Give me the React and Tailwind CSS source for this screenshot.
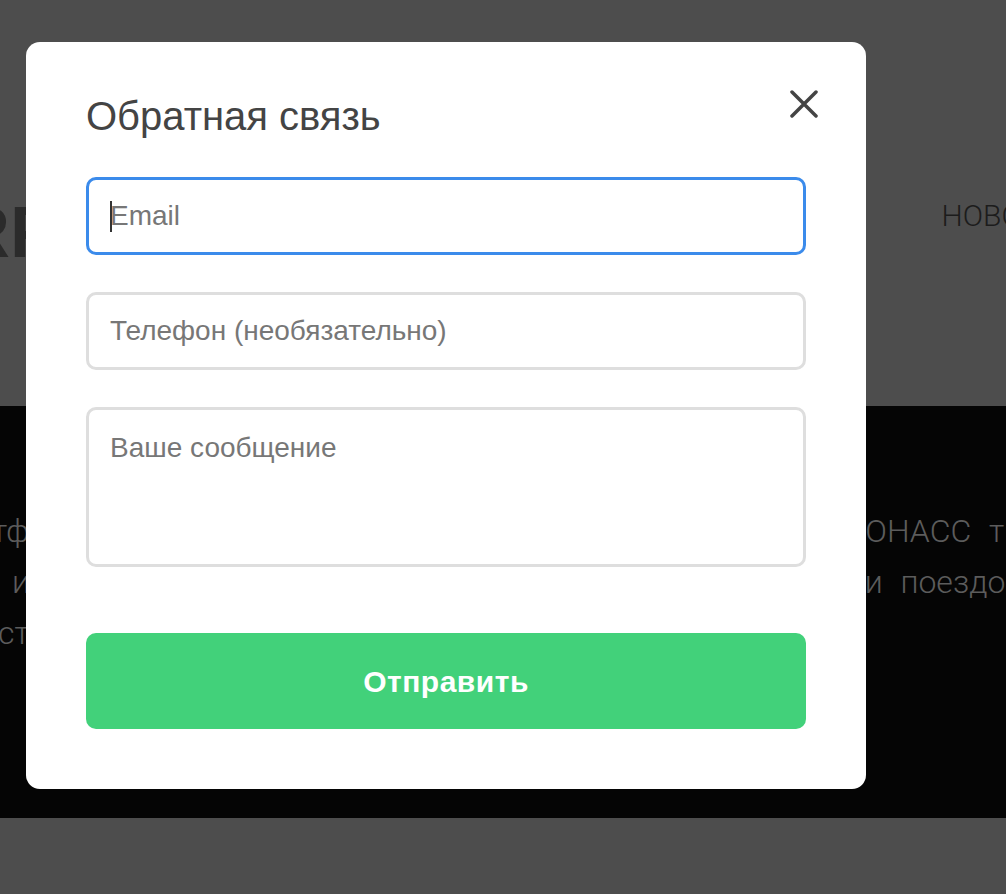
import React from 'react';

const CloseIcon = () => (
  <svg width="28" height="28" viewBox="0 0 28 28" fill="none">
    <path d="M2 2 L26 26 M26 2 L2 26" stroke="#444444" strokeWidth="3.5" strokeLinecap="round" />
  </svg>
);

const App = () => {
  return (
    <div className="relative w-full overflow-hidden font-['Liberation_Sans',Arial,sans-serif]">
      {/* page under the overlay */}
      <div className="h-[406px] bg-[#4d4d4d] font-['Roboto',sans-serif]">
        <div className="flex items-start justify-between whitespace-nowrap pt-[196px]">
          <span className="-ml-[42px] font-['Liberation_Sans',sans-serif] text-[72px] font-bold leading-none text-[#2b2b2b]">RP</span>
          <span className="-mr-[74px] mt-[5px] text-[30px] font-light leading-none text-[#1c1c1c]">НОВОСТИ</span>
        </div>
      </div>

      <div className="h-[412px] bg-[#050505] pt-[100px] font-['Roboto',sans-serif] text-[32px] font-light leading-[51px] text-[#5c5c5c]">
        <div className="flex justify-between whitespace-nowrap">
          <span className="-ml-[8px]">тф</span>
          <span className="-mr-[16px] [word-spacing:10px]">ОНАСС тр</span>
        </div>
        <div className="flex justify-between whitespace-nowrap">
          <span className="ml-[12px]">и</span>
          <span className="-mr-[16px] [word-spacing:10px]">и поездок</span>
        </div>
        <div className="flex justify-between whitespace-nowrap">
          <span className="-ml-[2px]">ст</span>
          <span></span>
        </div>
      </div>

      <div className="h-[76px] bg-[#4d4d4d]" />

      {/* feedback modal */}
      <div className="fixed inset-0 pl-[26px] pt-[42px]">
        <div className="relative w-[840px] rounded-[14px] bg-white px-[60px] pt-[54px] pb-[60px]">
          <h2 className="text-[40px] font-normal leading-none text-[#444444]">Обратная связь</h2>
          <button className="absolute right-[48px] top-[48px]">
            <CloseIcon />
          </button>

          <form className="mt-[41px] flex flex-col">
            <div className="relative">
              <input
                type="email"
                placeholder="Email"
                className="h-[78px] w-full rounded-[10px] border-[3px] border-[#3b8beb] px-[21px] text-[28px] text-[#333] placeholder-[#777777] outline-none"
              />
              <span className="absolute left-[24px] top-[24px] h-[31px] w-[2px] bg-[#333]" />
            </div>

            <input
              type="tel"
              placeholder="Телефон (необязательно)"
              className="mt-[37px] h-[78px] w-full rounded-[10px] border-[3px] border-[#dedede] px-[21px] text-[28px] text-[#333] placeholder-[#777777] outline-none"
            />

            <textarea
              placeholder="Ваше сообщение"
              className="mt-[37px] h-[160px] w-full resize-none rounded-[10px] border-[3px] border-[#dedede] px-[21px] pt-[17px] text-[28px] text-[#333] placeholder-[#777777] outline-none"
            />

            <button
              type="button"
              className="mt-[66px] h-[96px] w-full rounded-[10px] bg-[#42d17a] text-[30px] font-bold tracking-[0.5px] text-white"
            >
              Отправить
            </button>
          </form>
        </div>
      </div>
    </div>
  );
};

export default App;
